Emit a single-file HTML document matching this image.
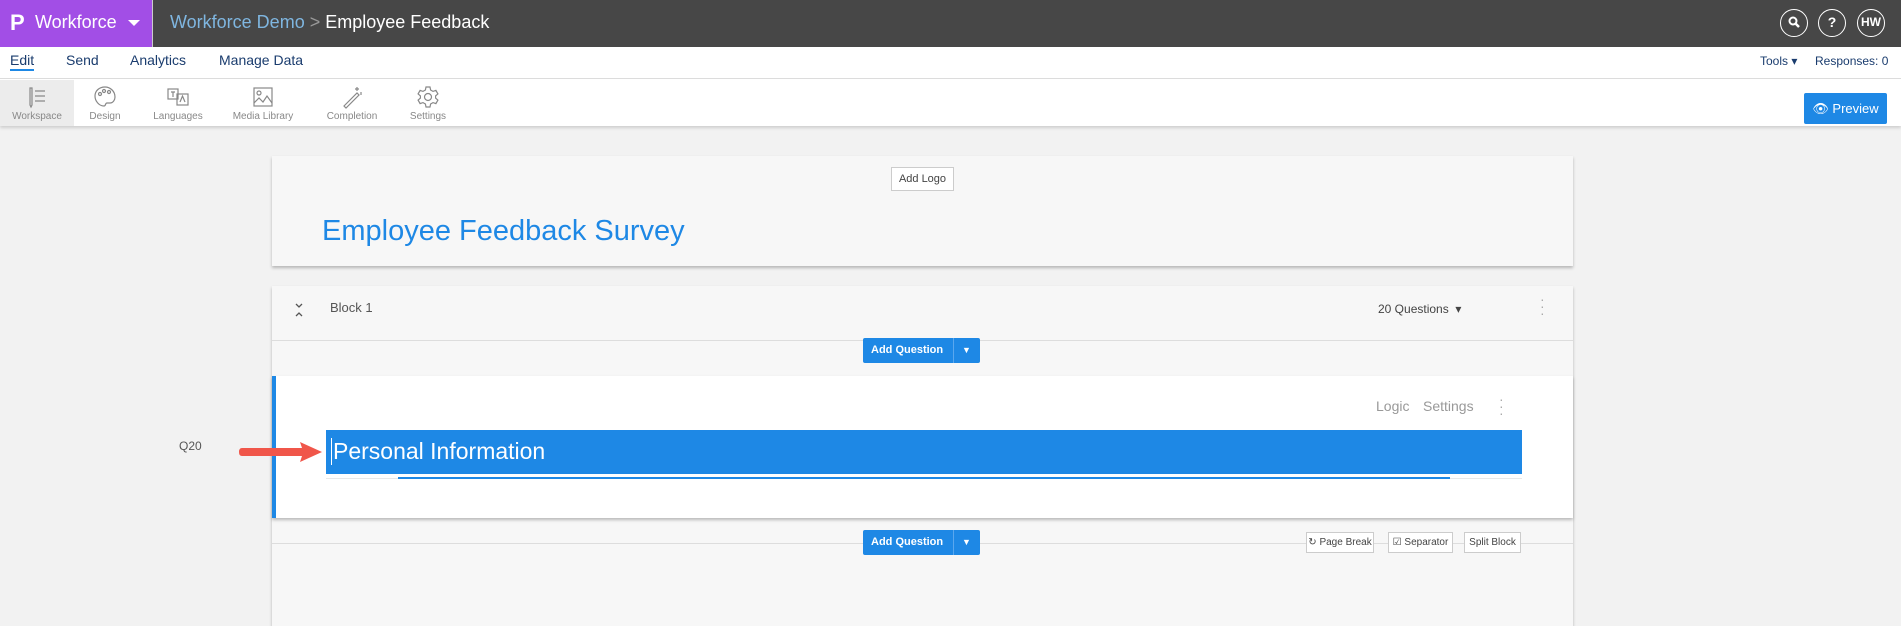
<!DOCTYPE html>
<html><head><meta charset="utf-8"><style>
*{box-sizing:border-box;margin:0;padding:0}
body{width:1901px;height:617px;overflow:hidden;background:#f2f2f2;font-family:"Liberation Sans",sans-serif;position:relative}
.abs{position:absolute}
.top{left:0;top:0;width:1901px;height:47px;background:#474747}
.purple{left:0;top:0;width:153px;height:47px;background:#a24ee6;border-right:1px solid #ccc}
.nav{left:0;top:47px;width:1901px;height:32px;background:#fff;border-bottom:1px solid #ddd}
.tb{left:0;top:79px;width:1901px;height:47px;background:#fff;box-shadow:0 2px 3px rgba(0,0,0,.15)}
.ti{position:absolute;top:0;height:47px;text-align:center;font-size:10px;color:#888}
.ti svg{display:block;margin:5px auto 2px}
.card{background:#f7f7f7;box-shadow:0 2px 3px rgba(0,0,0,.25)}
.btnw{background:#fff;border:1px solid #ccc;font-size:11px;color:#444;text-align:center}
.aq{background:#1e88e5;color:#fff;font-size:11px;font-weight:bold;border-radius:2px}
.circ{width:28px;height:28px;border:1.5px solid #fff;border-radius:50%;color:#fff;font-weight:bold;font-size:14px;text-align:center;line-height:25px}
</style></head><body>
<div class="abs top"></div>
<div class="abs purple"></div>
<div class="abs" style="left:10px;top:10px;color:#fff;font-size:22px;font-weight:bold">P</div>
<div class="abs" style="left:35px;top:12px;color:#fff;font-size:18px">Workforce</div>
<div class="abs" style="left:128px;top:20px;width:0;height:0;border-left:6px solid transparent;border-right:6px solid transparent;border-top:6px solid #fff"></div>
<div class="abs" style="left:170px;top:12px;font-size:18px;color:#7fb6e0">Workforce Demo <span style="color:#999">&gt;</span> <span style="color:#fff">Employee Feedback</span></div>
<div class="abs circ" style="left:1780px;top:9px"><svg width="14" height="14" viewBox="0 0 14 14" style="margin-top:5px"><circle cx="6" cy="6" r="3.5" fill="none" stroke="#fff" stroke-width="2"/><path d="M8.5 8.5l3.5 3.5" stroke="#fff" stroke-width="2.5"/></svg></div>
<div class="abs circ" style="left:1818px;top:9px">?</div>
<div class="abs circ" style="left:1857px;top:9px;font-size:12px">HW</div>
<div class="abs nav"></div>
<div class="abs" style="left:10px;top:52px;font-size:14px;color:#1a3c6e;border-bottom:2px solid #1e88e5;line-height:17px">Edit</div>
<div class="abs" style="left:66px;top:52px;font-size:14px;color:#1a3c6e">Send</div>
<div class="abs" style="left:130px;top:52px;font-size:14px;color:#1a3c6e">Analytics</div>
<div class="abs" style="left:219px;top:52px;font-size:14px;color:#1a3c6e">Manage Data</div>
<div class="abs" style="left:1760px;top:54px;font-size:12px;color:#1a3c6e">Tools &#9662;</div>
<div class="abs" style="left:1815px;top:54px;font-size:12px;color:#1a3c6e">Responses: 0</div>
<div class="abs tb"></div>
<div class="abs" style="left:0;top:80px;width:74px;height:46px;background:#ececec"></div>
<div class="abs" style="left:0;top:80px;width:1901px">
<div class="ti" style="left:0;width:74px"><svg width="24" height="24" viewBox="0 0 24 24" fill="none" stroke="#888" stroke-width="1.2"><path d="M5 3v17l1 2 1-2V3zM10 6h10M10 11h10M10 16h10"/></svg>Workspace</div>
<div class="ti" style="left:80px;width:50px"><svg width="24" height="24" viewBox="0 0 24 24" fill="none" stroke="#888" stroke-width="1.2"><path d="M12 2C6 2 2 6 2 11c0 5 4 10 9 10 2 0 1-3 3-3h3c3 0 5-3 5-6 0-6-5-10-10-10z"/><circle cx="7" cy="9" r="1.5"/><circle cx="11" cy="6" r="1.5"/><circle cx="16" cy="7" r="1.5"/></svg>Design</div>
<div class="ti" style="left:150px;width:56px"><svg width="24" height="24" viewBox="0 0 24 24" fill="none" stroke="#888" stroke-width="1.2"><rect x="2" y="4" width="10" height="10"/><rect x="11" y="9" width="11" height="11"/><path d="M5 7h4M7 7v5M14 17l2.5-6 2.5 6"/></svg>Languages</div>
<div class="ti" style="left:230px;width:66px"><svg width="24" height="24" viewBox="0 0 24 24" fill="none" stroke="#888" stroke-width="1.2"><rect x="3" y="3" width="18" height="18"/><circle cx="8" cy="8" r="2"/><path d="M3 18l5-5 4 4 4-6 5 7"/></svg>Media Library</div>
<div class="ti" style="left:322px;width:60px"><svg width="24" height="24" viewBox="0 0 24 24" fill="none" stroke="#888" stroke-width="1.2"><path d="M4 21l13-13 2 2-13 13zM17 2v4M15 4h4M21 7v3"/></svg>Completion</div>
<div class="ti" style="left:405px;width:46px"><svg width="24" height="24" viewBox="0 0 24 24" fill="none" stroke="#888" stroke-width="1.2"><circle cx="12" cy="12" r="3.5"/><path d="M10 2h4l.6 3 2.4 1.4 2.9-1 2 3.5-2.3 2v2.2l2.3 2-2 3.5-2.9-1-2.4 1.4-.6 3h-4l-.6-3-2.4-1.4-2.9 1-2-3.5 2.3-2v-2.2l-2.3-2 2-3.5 2.9 1L9.4 5z"/></svg>Settings</div>
</div>
<div class="abs aq" style="left:1804px;top:93px;width:83px;height:31px;line-height:31px;text-align:center;font-weight:normal;font-size:13px">&#128065; Preview</div>

<div class="abs card" style="left:272px;top:156px;width:1301px;height:110px"></div>
<div class="abs btnw" style="left:891px;top:167px;width:63px;height:24px;line-height:22px">Add Logo</div>
<div class="abs" style="left:322px;top:215px;font-size:29px;color:#1e88e5">Employee Feedback Survey</div>

<div class="abs card" style="left:272px;top:286px;width:1301px;height:340px"></div>
<div class="abs" style="left:272px;top:340px;width:1301px;height:1px;background:#ddd"></div>
<svg class="abs" style="left:294px;top:302px" width="10" height="16" viewBox="0 0 10 16" fill="none" stroke="#555" stroke-width="1.3"><path d="M2 2l3 3 3-3M2 14l3-3 3 3"/></svg>
<div class="abs" style="left:330px;top:300px;font-size:13px;color:#555">Block 1</div>
<div class="abs" style="left:1378px;top:302px;font-size:12px;color:#444">20 Questions &nbsp;&#9662;</div>
<div class="abs" style="left:1540px;top:296px;font-size:14px;color:#aaa;line-height:7px">&middot;<br>&middot;<br>&middot;</div>
<div class="abs aq" style="left:863px;top:338px;width:117px;height:25px"><span style="position:absolute;left:8px;top:6px">Add Question</span><span style="position:absolute;left:90px;top:0;width:1px;height:25px;background:#5aa7ee"></span><span style="position:absolute;left:99px;top:7px;font-size:9px">&#9660;</span></div>

<div class="abs" style="left:272px;top:376px;width:1301px;height:142px;background:#fff;border-left:4px solid #1e88e5;box-shadow:0 2px 3px rgba(0,0,0,.25)"></div>
<div class="abs" style="left:1376px;top:398px;font-size:14px;color:#999">Logic</div>
<div class="abs" style="left:1423px;top:398px;font-size:14px;color:#999">Settings</div>
<div class="abs" style="left:1499px;top:396px;font-size:14px;color:#aaa;line-height:7px">&middot;<br>&middot;<br>&middot;</div>
<div class="abs" style="left:326px;top:430px;width:1196px;height:44px;background:#1e88e5"></div>
<div class="abs" style="left:331px;top:438px;font-size:23px;color:#fff;border-left:1px solid #fff;padding-left:1px">Personal Information</div>
<div class="abs" style="left:326px;top:478px;width:1196px;height:1px;background:#e8e8e8"></div>
<div class="abs" style="left:398px;top:477px;width:1052px;height:2px;background:#1e88e5"></div>
<div class="abs" style="left:179px;top:439px;font-size:12px;color:#555">Q20</div>
<svg class="abs" style="left:236px;top:440px" width="92" height="24" viewBox="0 0 92 24"><path d="M6 8h60l-2-6 22 10-22 10 2-6H6q-3 0-3-4t3-4z" fill="#f0564a"/></svg>

<div class="abs" style="left:272px;top:543px;width:1301px;height:1px;background:#ddd"></div>
<div class="abs aq" style="left:863px;top:530px;width:117px;height:25px"><span style="position:absolute;left:8px;top:6px">Add Question</span><span style="position:absolute;left:90px;top:0;width:1px;height:25px;background:#5aa7ee"></span><span style="position:absolute;left:99px;top:7px;font-size:9px">&#9660;</span></div>
<div class="abs btnw" style="left:1306px;top:532px;width:68px;height:21px;line-height:19px;font-size:10px">&#8635; Page Break</div>
<div class="abs btnw" style="left:1388px;top:532px;width:65px;height:21px;line-height:19px;font-size:10px">&#9745; Separator</div>
<div class="abs btnw" style="left:1464px;top:532px;width:57px;height:21px;line-height:19px;font-size:10px">Split Block</div>
</body></html>
